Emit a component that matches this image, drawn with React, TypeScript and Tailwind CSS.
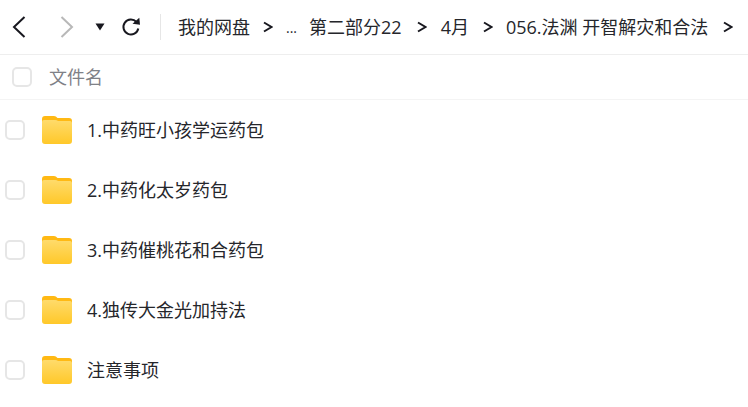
const font = { fontFamily: '"Open Sans","Noto Sans CJK SC",sans-serif' };

function Chevron() {
  return (
    <svg width="10" height="12" viewBox="0 0 10 12" className="shrink-0">
      <path d="M1 1.500 L8.500 6 L1 10.500" fill="none" stroke="#18181f" strokeWidth="2" />
    </svg>
  );
}

function Folder() {
  return (
    <svg width="30" height="28" viewBox="0 0 30 28" className="shrink-0">
      <defs>
        <linearGradient id="fg" x1="0" y1="0" x2="0" y2="1">
          <stop offset="0" stopColor="#ffdb6b" />
          <stop offset="1" stopColor="#ffc829" />
        </linearGradient>
      </defs>
      <path d="M0 3 Q0 0 3 0 H12 Q14 0 15.500 2 H27 Q30 2 30 5 V12 H0 Z" fill="#ffb914" />
      <path d="M0 6 Q0 4 2 4 H13 Q15 4 16 5 H28 Q30 5 30 7 V25 Q30 28 27 28 H3 Q0 28 0 25 Z" fill="url(#fg)" />
    </svg>
  );
}

function Row({ name }: { name: string }) {
  return (
    <div className="flex h-[60px] items-center">
      <div className="ml-[5px] h-[20px] w-[20px] rounded-[5px] border-2 border-[#e6e6e6]" />
      <div className="ml-[17px]"><Folder /></div>
      <div className="ml-[15px] text-[18px] text-[#25262b]">{name}</div>
    </div>
  );
}

export default function App() {
  const rows = ["1.中药旺小孩学运药包", "2.中药化太岁药包", "3.中药催桃花和合药包", "4.独传大金光加持法", "注意事项"];
  return (
    <div className="h-[407px] w-[748px] overflow-hidden bg-white" style={font}>
      <div className="flex h-[55px] items-center border-b border-[#eeeeee]">
        <svg width="14" height="22" viewBox="0 0 14 22" className="ml-[12px] shrink-0">
          <path d="M12.500 1 L2 11 L12.500 21" fill="none" stroke="#18181f" strokeWidth="2" />
        </svg>
        <svg width="14" height="22" viewBox="0 0 14 22" className="ml-[34px] shrink-0">
          <path d="M1.500 1 L12 11 L1.500 21" fill="none" stroke="#b8b8b8" strokeWidth="2" />
        </svg>
        <svg width="10" height="8" viewBox="0 0 10 8" className="ml-[21px] shrink-0">
          <path d="M0.500 0.500 H9.500 L5 7.500 Z" fill="#18181f" />
        </svg>
        <svg width="20" height="20" viewBox="0 0 20 20" className="ml-[16px] shrink-0">
          <path d="M15.500 5 A7.500 7.500 0 1 0 17.300 11.500" fill="none" stroke="#18181f" strokeWidth="2" />
          <path d="M11.500 6.800 L19 7.800 L18.300 0.800 Z" fill="#18181f" />
        </svg>
        <div className="ml-[19px] h-[26px] w-px bg-[#e6e6e6]" />
        <div className="ml-[17px] flex items-center text-[18px] whitespace-nowrap text-[#25262b]">
          <span>我的网盘</span>
          <span className="ml-[13px]"><Chevron /></span>
          <span className="ml-[13px] text-[14px]">...</span>
          <span className="ml-[12px]">第二部分22</span>
          <span className="ml-[15px]"><Chevron /></span>
          <span className="ml-[14px]">4月</span>
          <span className="ml-[14px]"><Chevron /></span>
          <span className="ml-[13px]">056.法渊 开智解灾和合法</span>
          <span className="ml-[15px]"><Chevron /></span>
        </div>
      </div>
      <div className="flex h-[45px] items-center border-b border-[#f4f4f4]">
        <div className="ml-[12px] h-[20px] w-[20px] rounded-[5px] border-2 border-[#e6e6e6]" />
        <div className="ml-[17px] text-[18px] text-[#7f8187]">文件名</div>
      </div>
      {rows.map((r) => <Row key={r} name={r} />)}
    </div>
  );
}
